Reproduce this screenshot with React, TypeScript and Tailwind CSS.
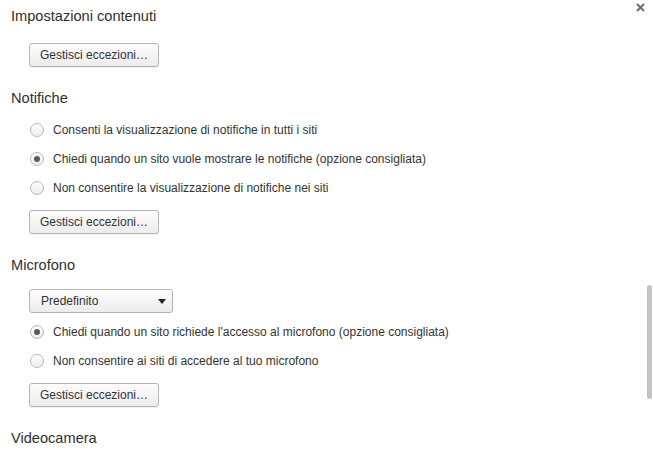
import React, { useState } from "react";

const font = { fontFamily: '"Liberation Sans", Arial, Helvetica, sans-serif' };

const Heading = ({ children, className = "" }: { children: React.ReactNode; className?: string }) => (
  <div className={`h-[20px] leading-[20px] text-[14.6px] text-[#303030] ${className}`}>{children}</div>
);

const ManageButton = ({ className = "" }: { className?: string }) => (
  <button
    className={`ml-[18px] h-[24px] w-[130px] rounded-[3px] border border-[#b4b4b4] bg-gradient-to-b from-[#fdfdfd] to-[#ececec] text-[12px] text-[#333] leading-[22px] shadow-[0_1px_0_rgba(0,0,0,0.06)] ${className}`}
  >
    Gestisci eccezioni…
  </button>
);

const Radio = ({
  label,
  checked,
  onClick,
}: {
  label: string;
  checked: boolean;
  onClick: () => void;
}) => (
  <div className="h-[29px] flex items-center pl-[19px] cursor-default" onClick={onClick}>
    <span className="w-[14px] h-[14px] rounded-full border border-[#b9b9b9] bg-gradient-to-b from-[#fefefe] to-[#ededed] flex items-center justify-center">
      {checked && <span className="w-[6px] h-[6px] rounded-full bg-[#5a5a5a]" />}
    </span>
    <span className="ml-[9px] text-[12px] text-[#333]">{label}</span>
  </div>
);

export default function App() {
  const [notif, setNotif] = useState(1);
  const [mic, setMic] = useState(0);

  return (
    <div className="relative w-[653px] h-[456px] bg-white overflow-hidden" style={font}>
      <div className="absolute top-[3px] right-[8px] w-[9px] h-[9px]">
        <svg viewBox="0 0 9 9" width="9" height="9">
          <path d="M1 1 L8 8 M8 1 L1 8" stroke="#6f6f6f" strokeWidth="2" />
        </svg>
      </div>
      <div className="absolute top-[285px] right-[1px] w-[5px] h-[114px] rounded-full bg-[#c3c3c3]" />

      <div className="flex flex-col pl-[11px] pt-[6px]">
        <Heading>Impostazioni contenuti</Heading>
        <div className="mt-[16px]">
          <ManageButton />
        </div>

        <Heading className="mt-[21px]">Notifiche</Heading>
        <div className="mt-[7px] flex flex-col">
          <Radio
            label="Consenti la visualizzazione di notifiche in tutti i siti"
            checked={notif === 0}
            onClick={() => setNotif(0)}
          />
          <Radio
            label="Chiedi quando un sito vuole mostrare le notifiche (opzione consigliata)"
            checked={notif === 1}
            onClick={() => setNotif(1)}
          />
          <Radio
            label="Non consentire la visualizzazione di notifiche nei siti"
            checked={notif === 2}
            onClick={() => setNotif(2)}
          />
        </div>
        <div className="mt-[7px]">
          <ManageButton />
        </div>

        <Heading className="mt-[21px]">Microfono</Heading>
        <div className="mt-[14px] ml-[18px] h-[24px] w-[144px] rounded-[3px] border border-[#b4b4b4] bg-gradient-to-b from-[#fdfdfd] to-[#ececec] flex items-center justify-between pl-[11px] pr-[6px]">
          <span className="text-[12px] text-[#333]">Predefinito</span>
          <svg width="8" height="5" viewBox="0 0 8 5">
            <path d="M0 0 H8 L4 5 Z" fill="#222" />
          </svg>
        </div>
        <div className="mt-[4px] flex flex-col">
          <Radio
            label="Chiedi quando un sito richiede l'accesso al microfono (opzione consigliata)"
            checked={mic === 0}
            onClick={() => setMic(0)}
          />
          <Radio
            label="Non consentire ai siti di accedere al tuo microfono"
            checked={mic === 1}
            onClick={() => setMic(1)}
          />
        </div>
        <div className="mt-[7px]">
          <ManageButton />
        </div>

        <Heading className="mt-[21px]">Videocamera</Heading>
      </div>
    </div>
  );
}
